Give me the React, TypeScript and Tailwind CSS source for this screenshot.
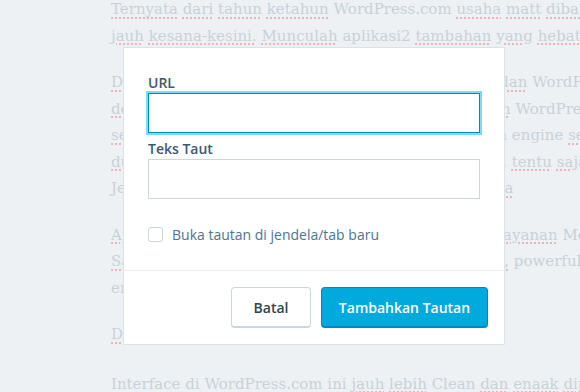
import React from "react";

const english = new Set(["WordPress.com", "WordPress", "aplikasi2", "engine", "powerful", "Interface", "Clean", "di", "ini", "Media", "Jetpack", "self-hosted", "desktop", "stabil"]);

function Line({ text }: { text: string }) {
  const words = text.split(" ");
  return (
    <span className="block whitespace-nowrap">
      {words.map((w, i) => (
        <React.Fragment key={i}>
          {english.has(w.replace(/[.,]$/, "")) ? (
            w
          ) : (
            <span className="underline decoration-dotted decoration-[#eeb4b8] decoration-[1.5px] underline-offset-[3px]">
              {w}
            </span>
          )}
          {i < words.length - 1 ? " " : ""}
        </React.Fragment>
      ))}
    </span>
  );
}

const paragraphs = [
  [
    "Ternyata dari tahun ketahun WordPress.com usaha matt dibawah bendera",
    "jauh kesana-kesini. Munculah aplikasi2 tambahan yang hebat dan",
  ],
  [
    "Dengan hadirnya konsep baku ini, WordPress.com dan WordPress",
    "dengan fitur-fitur yang dimiliki, oleh versi tambahan WordPress",
    "semakin mudah, dengan memakai mesin yang sama engine server",
    "dulu baru bisa dinikmati oleh pengguna self-hosted, tentu saja",
    "Jetpack sebagai jembatan penghubung keduanya dia",
  ],
  [
    "Aplikasi desktop ini kini terhubung dengan semua layanan Media",
    "Saat ini aplikasi tersebut sudah cukup stabil ringan, powerful untuk",
    "engine",
  ],
  ["Dan"],
  ["Interface di WordPress.com ini jauh lebih Clean dan enaak dipakai"],
];

export default function App() {
  return (
    <div className="relative h-[392px] w-[580px] overflow-hidden bg-[#edf1f4]">
      <div className="-mt-[4px] pl-[111px] font-['DejaVu_Serif',serif] text-[15px] leading-[26.5px] text-[#c8d1d9]">
        {paragraphs.map((p, i) => (
          <p key={i} className={i === 3 ? "mb-[23px]" : "mb-[20px]"}>
            {p.map((l, j) => (
              <Line key={j} text={l} />
            ))}
          </p>
        ))}
      </div>

      <div className="absolute left-[123px] top-[47px] w-[382px] border border-[#dce3e8] bg-white font-['Open_Sans',sans-serif]">
        <div className="px-6 pt-[25px] pb-[26px]">
          <label className="block text-[14px] font-semibold leading-5 text-[#3d596d]">URL</label>
          <input className="block h-10 w-full border border-[#0087be] shadow-[0_0_0_2px_#78dcfa] outline-none" />
          <label className="mt-[6px] block text-[14px] font-semibold leading-5 text-[#3d596d]">Teks Taut</label>
          <input className="block h-10 w-full border border-[#c8d7e1] outline-none" />
          <label className="mt-[25px] flex h-5 items-center gap-[9px]">
            <span className="h-[15px] w-[15px] rounded-[3px] border border-[#c8d7e1] bg-white" />
            <span className="text-[14px] text-[#4f748e]">Buka tautan di jendela/tab baru</span>
          </label>
        </div>
        <div className="flex justify-end gap-[10px] border-t border-[#e9eff3] p-4">
          <button className="h-[41px] w-[80px] rounded-[4px] border border-b-2 border-[#c8d7e1] bg-white text-[14px] font-semibold text-[#2e4453]">
            Batal
          </button>
          <button className="h-[41px] w-[167px] rounded-[4px] border border-b-2 border-[#0087be] bg-[#00aadc] text-[14px] font-semibold text-white">
            Tambahkan Tautan
          </button>
        </div>
      </div>
    </div>
  );
}
